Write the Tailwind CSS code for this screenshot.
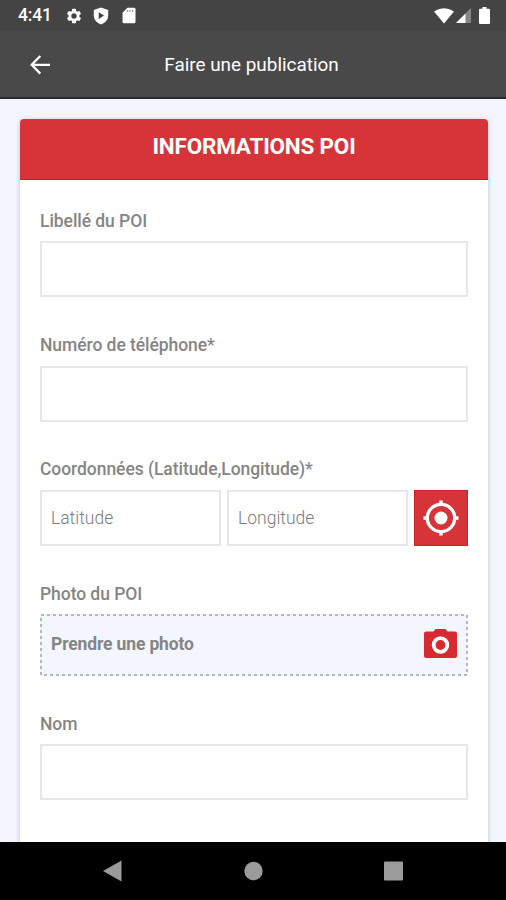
<!DOCTYPE html>
<html lang="fr">
<head>
<meta charset="utf-8">
<title>Faire une publication</title>
<script src="https://cdn.jsdelivr.net/npm/@tailwindcss/browser@4"></script>
</head>
<body class="w-[506px] h-[900px] overflow-hidden flex flex-col bg-[#f3f6fe] font-['Roboto',sans-serif] text-[#858585]">
<div class="h-[30px] shrink-0 bg-[#444444] flex items-center text-white pl-[18px] pr-[16px] pt-px">
  <span class="text-[17.500px] tracking-[-0.2px] font-medium leading-none w-[47px] whitespace-nowrap pt-px">4:41</span>
  <svg class="w-[18px] h-[18px]" viewBox="0 0 24 24" fill="currentColor"><path d="M19.14 12.94c.04-.3.06-.61.06-.94s-.02-.64-.07-.94l2.03-1.58a.49.49 0 0 0 .12-.61l-1.92-3.32a.49.49 0 0 0-.59-.22l-2.39.96a7 7 0 0 0-1.62-.94l-.36-2.54A.48.48 0 0 0 13.92 2.4h-3.84a.48.48 0 0 0-.47.41l-.36 2.54c-.59.24-1.13.57-1.62.94l-2.39-.96a.48.48 0 0 0-.59.22L2.74 8.87a.48.48 0 0 0 .12.61l2.03 1.58a7 7 0 0 0 0 1.88l-2.03 1.58a.49.49 0 0 0-.12.61l1.92 3.32c.12.22.37.29.59.22l2.39-.96c.5.38 1.03.7 1.62.94l.36 2.54c.05.24.24.41.48.41h3.84c.24 0 .44-.17.47-.41l.36-2.54a7 7 0 0 0 1.62-.94l2.39.96c.22.08.47 0 .59-.22l1.92-3.32a.48.48 0 0 0-.12-.61zM12 15.600a3.600 3.600 0 1 1 0-7.200 3.600 3.600 0 0 1 0 7.200z"/></svg>
  <svg class="w-[16px] h-[18px] ml-[10px]" viewBox="0 0 16 18"><path d="M8 .5 15.200 3v5.500c0 4.200-3 7.500-7.200 9C3.800 16 .8 12.700.8 8.500V3z" fill="currentColor"/><path d="M5.700 5.200v6.800L11 8.600z" fill="#444"/></svg>
  <svg class="w-[14px] h-[17px] ml-[13px]" viewBox="0 0 14 17"><path d="M5.500.8h6.500q1.500 0 1.500 1.500v12.500q0 1.500-1.500 1.500H2q-1.500 0-1.500-1.500V5.800z" fill="currentColor"/><path d="M5.500 3v2M8 3v2M10.500 3v2" stroke="#999" stroke-width="1.200"/></svg>
  <svg class="w-[20px] h-[16px] ml-auto" viewBox="0 0 20 16"><path d="M0 3.500Q10-2.800 20 3.500L10 15.500z" fill="currentColor"/></svg>
  <svg class="w-[15px] h-[15px] ml-[2px]" viewBox="0 0 15 15"><path d="M0 15 15 0v15z" fill="#858585"/><path d="M0 15 9.500 5.500V15z" fill="currentColor"/></svg>
  <svg class="w-[11px] h-[17px] ml-[8px]" viewBox="0 0 11 17"><path d="M3.500 0h4v1.800H10q1 0 1 1V16q0 1-1 1H1q-1 0-1-1V2.800q0-1 1-1h2.500z" fill="currentColor"/></svg>
</div>
<header class="relative h-[69px] shrink-0 bg-[#494949] border-b-2 border-[#2b2b2b] flex items-center justify-center text-white">
  <svg class="absolute left-[30px] top-[25px] w-[20px] h-[20px]" viewBox="0 0 20 20" fill="none" stroke="currentColor" stroke-width="2.300"><path d="M10.300 1 1.700 9.800l8.600 8.800M2 9.800h18"/></svg>
  <h1 class="text-[18.900px] leading-none whitespace-nowrap -ml-[3px] pt-[3px]">Faire une publication</h1>
</header>
<main class="h-[743px] shrink-0 overflow-hidden pl-5 pr-[18px] pt-5">
  <section class="h-[760px] rounded bg-white shadow-[0_1px_5px_rgba(0,0,0,0.22)]">
    <h2 class="h-[61px] rounded-t bg-[#d73439] border-b border-[#c51e25] pt-[14px] text-center text-[22.500px] tracking-[-0.2px] leading-[27px] font-bold text-white">INFORMATIONS POI</h2>
    <form class="px-5 pt-[29px] flex flex-col text-[17.500px] leading-6">
      <label class="font-medium tracking-[-0.06px]">Libellé du POI</label>
      <input class="mt-2 h-[56px] border-2 border-[#e7e7e7]">
      <label class="mt-[36px] font-medium tracking-[-0.06px]">Numéro de téléphone*</label>
      <input class="mt-[9px] h-[56px] border-2 border-[#e7e7e7]">
      <label class="mt-[35px] font-medium tracking-[-0.06px]">Coordonnées (Latitude,Longitude)*</label>
      <div class="mt-[9px] flex gap-[6px] h-[56px]">
        <input class="min-w-0 flex-1 border-2 border-[#e7e7e7] px-[9px] font-light placeholder:text-[#7c7c7c]" placeholder="Latitude">
        <input class="min-w-0 flex-1 border-2 border-[#e7e7e7] px-[9px] font-light placeholder:text-[#7c7c7c]" placeholder="Longitude">
        <button type="button" class="w-[54px] bg-[#d73439] border border-[#cb2027] flex items-center justify-center">
          <svg class="w-[36px] h-[36px] -mt-px" viewBox="0 0 36 36" fill="none" stroke="white"><circle cx="18" cy="18" r="13.700" stroke-width="3.300"/><circle cx="18" cy="18" r="6.500" fill="white" stroke="none"/><path d="M18 .5v5M18 30.500v5M.5 18h5M30.500 18h5" stroke-width="3.500"/></svg>
        </button>
      </div>
      <label class="mt-[36px] font-medium tracking-[-0.06px]">Photo du POI</label>
      <div class="mt-[8px] h-[62px] bg-[#f3f6fe] flex items-center justify-between px-[11px] relative">
        <svg class="absolute inset-0 w-full h-full" viewBox="0 0 428 62" fill="none"><rect x="1" y="1" width="426" height="60" stroke="#a3a3a6" stroke-width="1.500" stroke-dasharray="3 3"/></svg>
        <span class="font-bold tracking-[-0.14px] -mt-[2px]">Prendre une photo</span>
        <svg class="w-[33px] h-[29px] -mt-[3px]" viewBox="0 0 33 29"><path d="M11.500 0h10l2 2.500H31q2 0 2 2V27q0 2-2 2H2q-2 0-2-2V4.500q0-2 2-2h7.500z" fill="#d52b30"/><circle cx="16.500" cy="16" r="6.800" fill="none" stroke="white" stroke-width="3.800"/></svg>
      </div>
      <label class="mt-[36px] font-medium tracking-[-0.06px]">Nom</label>
      <input class="mt-[8px] h-[56px] border-2 border-[#e7e7e7]">
    </form>
  </section>
</main>
<nav class="h-[58px] shrink-0 bg-black text-[#9b9b9b]">
  <svg class="w-full h-full" viewBox="0 0 506 58" fill="currentColor"><path d="M103 29 121.500 18.500v21z"/><circle cx="253.500" cy="29" r="9.200"/><rect x="384" y="19.500" width="19" height="19" rx="1"/></svg>
</nav>
</body>
</html>
